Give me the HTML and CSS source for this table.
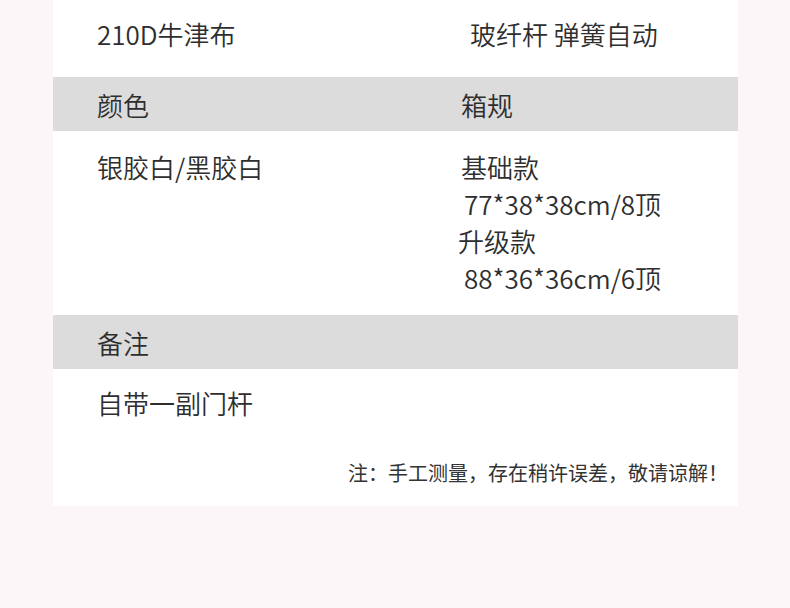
FILE: index.html
```html
<!DOCTYPE html>
<html lang="zh-CN">
<head>
<meta charset="utf-8">
<title>规格</title>
<link rel="stylesheet" href="styles.css">
</head>
<body>
<div class="card">
  <div class="row row-top">
    <div class="cell">210D牛津布</div>
    <div class="cell cell-r1">玻纤杆 弹簧自动</div>
  </div>
  <div class="row head">
    <div class="cell">颜色</div>
    <div class="cell">箱规</div>
  </div>
  <div class="row row-spec">
    <div class="cell">银胶白/黑胶白</div>
    <div class="cell lines">
      <div class="l1">基础款</div>
      <div class="l2">77*38*38cm/8顶</div>
      <div class="l3">升级款</div>
      <div class="l2">88*36*36cm/6顶</div>
    </div>
  </div>
  <div class="row head">
    <div class="cell">备注</div>
    <div class="cell"></div>
  </div>
  <div class="row row-note">
    <div class="cell">自带一副门杆</div>
  </div>
  <p class="note">注：手工测量，存在稍许误差，敬请谅解！</p>
</div>
</body>
</html>
```

FILE: styles.css
```css
html, body {
  margin: 0;
  padding: 0;
}
body {
  background: #fdf6f8;
  width: 790px;
  height: 608px;
  overflow: hidden;
  font-family: "Noto Sans CJK SC", "Noto Sans", sans-serif;
  color: #2e2e2e;
}
.card {
  margin-left: 53px;
  width: 685px;
  background: #ffffff;
  padding-bottom: 19px;
}
.row {
  display: grid;
  grid-template-columns: 364px 1fr;
  padding-left: 44px;
  font-size: 26px;
  font-weight: 350;
  line-height: 37px;
}
.row-top {
  height: 77px;
  box-sizing: border-box;
  padding-top: 15px;
}
.cell-r1 {
  padding-left: 9px;
}
.head {
  background: #dcdcdc;
  height: 54px;
  align-items: center;
}
.row-spec {
  padding-top: 17px;
  padding-bottom: 19px;
}
.lines .l2 {
  padding-left: 3px;
}
.lines .l3 {
  margin-left: -3px;
}
.row-note {
  padding-top: 15px;
}
.note {
  margin: 38px 0 0 0;
  padding-right: 10px;
  text-align: right;
  font-size: 20px;
  line-height: 28px;
  color: #333333;
}
```
